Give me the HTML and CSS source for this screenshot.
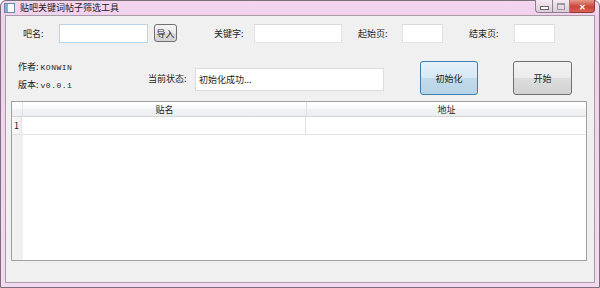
FILE: index.html
```html
<!DOCTYPE html>
<html>
<head>
    <title>贴吧关键词帖子筛选工具</title>
    <link rel="stylesheet" href="styles.css">
</head>
<body>
    <div class="window">
        <!-- title bar -->
        <div class="titlebar">
            <span class="app-icon"></span>
            <span class="title">贴吧关键词帖子筛选工具</span>
            <div class="caption-buttons">
                <span class="cap min"><i></i></span>
                <span class="cap max"><i></i></span>
                <span class="cap close">&#x2715;</span>
            </div>
        </div>

        <div class="client">
            <div class="row-top">
                <span class="label l-name">吧名:</span>
                <input type="text" class="field f-name focus">
                <button class="btn btn-import">导入</button>
                <span class="label l-key">关键字:</span>
                <input type="text" class="field f-key">
                <span class="label l-start">起始页:</span>
                <input type="text" class="field f-page">
                <span class="label l-end">结束页:</span>
                <input type="text" class="field f-page">
            </div>

            <div class="row-mid">
                <div class="info">
                    <div>作者: <span class="mono">KONWIN</span></div>
                    <div>版本: <span class="mono">v0.0.1</span></div>
                </div>
                <span class="label l-status">当前状态:</span>
                <div class="status">初始化成功...</div>
                <button class="btn big blue">初始化</button>
                <button class="btn big gray">开始</button>
            </div>

            <div class="table">
                <div class="thead">
                    <div class="corner"></div>
                    <div class="th c1">贴名</div>
                    <div class="th c2">地址</div>
                </div>
                <div class="trow">
                    <div class="rownum">1</div>
                    <div class="td c1"></div>
                    <div class="td c2"></div>
                </div>
                <div class="tfill">
                    <div class="rowgutter"></div>
                    <div class="blank"></div>
                </div>
            </div>
        </div>
    </div>
</body>
</html>
```

FILE: styles.css
```css
body {
    margin: 0;
    background: #ffffff;
    font-family: "Noto Sans CJK SC", "Liberation Sans", sans-serif;
    font-size: 9px;
    color: #1e1e1e;
}

.window {
    width: 598px;
    height: 286px;
    border: 1px solid #7a6f7a;
    border-radius: 6px 6px 0 0;
    background: linear-gradient(#f4d6f0, #f0d0ec 20px, #f3d9f0);
    display: flex;
    flex-direction: column;
}

/* ---- title bar ---- */
.titlebar {
    height: 14px;
    display: flex;
    align-items: center;
    position: relative;
}

.app-icon {
    width: 9px;
    height: 8px;
    margin-left: 3px;
    border: 1px solid #6b8aa8;
    background: linear-gradient(90deg, #7fb0d8 35%, #ffffff 35%);
}

.title {
    margin-left: 5px;
    font-size: 9px;
    line-height: 10px;
    color: #1a1a1a;
}

.caption-buttons {
    position: absolute;
    right: 4px;
    top: -1px;
    display: flex;
}

.cap {
    height: 13px;
    border: 1px solid #8e7f8e;
    border-top: none;
    box-sizing: border-box;
    display: flex;
    align-items: center;
    justify-content: center;
    background: linear-gradient(#f6eaf4, #dccbd8);
}

.cap.min {
    width: 18px;
    border-radius: 0 0 0 4px;
}

.cap.min i {
    width: 7px;
    height: 2px;
    margin-top: 3px;
    background: #fff;
    border: 1px solid #666;
}

.cap.max {
    width: 17px;
    border-left: none;
}

.cap.max i {
    width: 6px;
    height: 4px;
    border: 1px solid #9a9a9a;
    border-top-width: 2px;
}

.cap.close {
    width: 25px;
    border-left: none;
    border-radius: 0 0 4px 0;
    background: linear-gradient(#e59a8a, #c8463a 55%, #d9634e);
    color: #fff;
    font-size: 8px;
    font-weight: bold;
    border-color: #8a3a32;
}

/* ---- client area ---- */
.client {
    flex: 1;
    margin: 0 4px 4px 4px;
    border: 1px solid #a99aa8;
    background: #f0f0f0;
    display: flex;
    flex-direction: column;
}

.label {
    white-space: nowrap;
}

.field {
    box-sizing: border-box;
    height: 19px;
    border: 1px solid #e2e2e2;
    border-top-color: #d8d8d8;
    background: #fff;
    padding: 0;
    margin: 0;
}

.field.focus {
    border-color: #b8d4ea;
}

.row-top {
    display: flex;
    align-items: center;
    margin-top: 7px;
    height: 20px;
}

.l-name { margin-left: 17px; width: 36px; }
.f-name { width: 89px; }
.btn-import { margin-left: 6px; width: 23px; height: 18px; }
.l-key { margin-left: 37px; width: 40px; }
.f-key { width: 88px; }
.l-start { margin-left: 16px; width: 44px; }
.f-page { width: 41px; }
.l-end { margin-left: 26px; width: 45px; }

.btn {
    box-sizing: border-box;
    border: 1px solid #707070;
    border-radius: 3px;
    background: linear-gradient(#f3f3f3, #ebebeb 50%, #dddddd 51%, #d2d2d2);
    font-family: "Noto Sans CJK SC", "Liberation Sans", sans-serif;
    font-size: 9px;
    padding: 0;
    color: #1e1e1e;
}

.row-mid {
    display: flex;
    align-items: center;
    margin-top: 18px;
    height: 34px;
}

.info {
    margin-left: 12px;
    width: 130px;
    display: flex;
    flex-direction: column;
    gap: 5px;
    margin-top: -5px;
}

.mono {
    font-family: "Liberation Mono", monospace;
    font-size: 8px;
    letter-spacing: 0.5px;
}

.l-status { width: 47px; margin-top: 1px; }

.status {
    box-sizing: border-box;
    width: 189px;
    height: 23px;
    margin-top: 2px;
    background: #fff;
    border: 1px solid #dcdcdc;
    padding: 0 4px 0 3px;
    display: flex;
    align-items: center;
}

.btn.big {
    width: 58px;
    height: 34px;
}

.btn.blue {
    margin-left: 36px;
    border-color: #3c7fb1;
    background: linear-gradient(#e5f1f9, #d6e8f4 50%, #c2dbeb 51%, #b6d3e6);
}

.btn.gray {
    margin-left: 35px;
    width: 59px;
}

/* ---- table ---- */
.table {
    margin: 6px 7px 21px 5px;
    flex: 1;
    border: 1px solid #a0a0a0;
    background: #fff;
    display: flex;
    flex-direction: column;
}

.thead {
    display: flex;
    height: 14px;
    background: linear-gradient(#ffffff, #f7f8fa 50%, #f1f2f4 51%, #eceef0);
    border-bottom: 1px solid #d5d5d5;
}

.corner {
    width: 10px;
    border-right: 1px solid #e3e3e3;
}

.th {
    display: flex;
    align-items: center;
    justify-content: center;
    border-right: 1px solid #e0e0e0;
}

.c1 { width: 283px; }
.c2 { flex: 1; border-right: none; }

.trow {
    display: flex;
    height: 17px;
    border-bottom: 1px solid #e3e3e3;
}

.rownum {
    width: 10px;
    box-sizing: border-box;
    padding-left: 2px;
    display: flex;
    align-items: center;
    background: linear-gradient(90deg, #fbfbfb, #f0f0f0);
    border-right: 1px solid #e3e3e3;
}

.td {
    border-right: 1px solid #e3e3e3;
}

.td.c2 { border-right: none; }

.tfill {
    flex: 1;
    display: flex;
}

.rowgutter {
    width: 11px;
    background: #f0f0f0;
}

.blank {
    flex: 1;
}
```
